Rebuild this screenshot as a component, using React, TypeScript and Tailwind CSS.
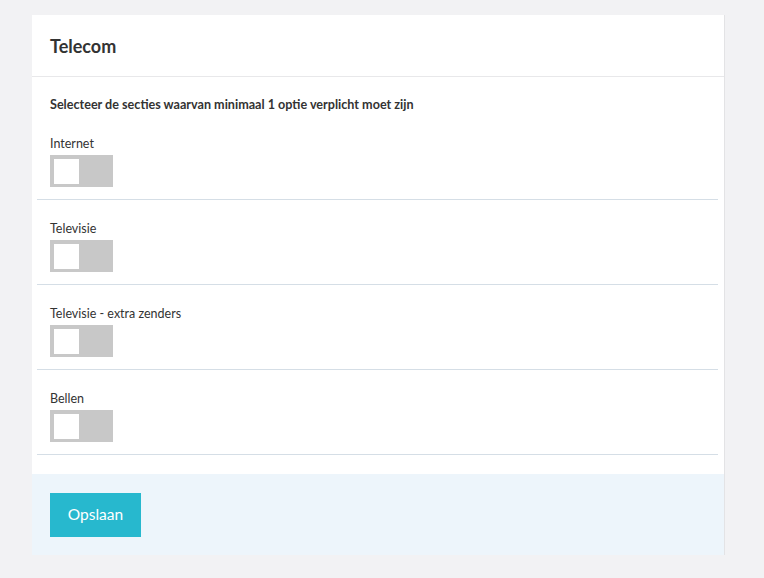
const sections = ["Internet", "Televisie", "Televisie - extra zenders", "Bellen"];

function Toggle() {
  return (
    <div className="flex h-[32px] w-[63px] items-center bg-[#c8c8c8] px-[4px]">
      <div className="h-[25px] w-[25px] bg-white" />
    </div>
  );
}

export default function App() {
  return (
    <div className="min-h-[578px] w-full bg-[#f2f2f4] pt-[15px] font-['Lato',sans-serif] text-[#333]">
      <div className="ml-[32px] w-[693px] border-r border-[#e3e3e5] bg-white">
        <div className="flex h-[62px] items-center border-b border-[#e8e8ea] px-[18px] pt-[2px]">
          <h1 className="text-[18px] font-bold">Telecom</h1>
        </div>
        <div className="pl-[5px] pr-[6px]">
          <p className="pl-[13px] pt-[19px] text-[12.6px] font-bold leading-[18px]">
            Selecteer de secties waarvan minimaal 1 optie verplicht moet zijn
          </p>
          <div className="pt-[1px]">
            {sections.map((s) => (
              <div key={s} className="border-b border-[#d5dee6] pb-[12px] pl-[13px] pt-[19px]">
                <div className="mb-[1px] text-[12.5px] leading-[20px]">{s}</div>
                <Toggle />
              </div>
            ))}
          </div>
        </div>
        <div className="h-[19px]" />
        <div className="bg-[#edf5fb] px-[18px] pb-[18px] pt-[19px]">
          <button className="h-[44px] w-[91px] bg-[#27b8ce] text-[15.5px] text-white">Opslaan</button>
        </div>
      </div>
    </div>
  );
}
